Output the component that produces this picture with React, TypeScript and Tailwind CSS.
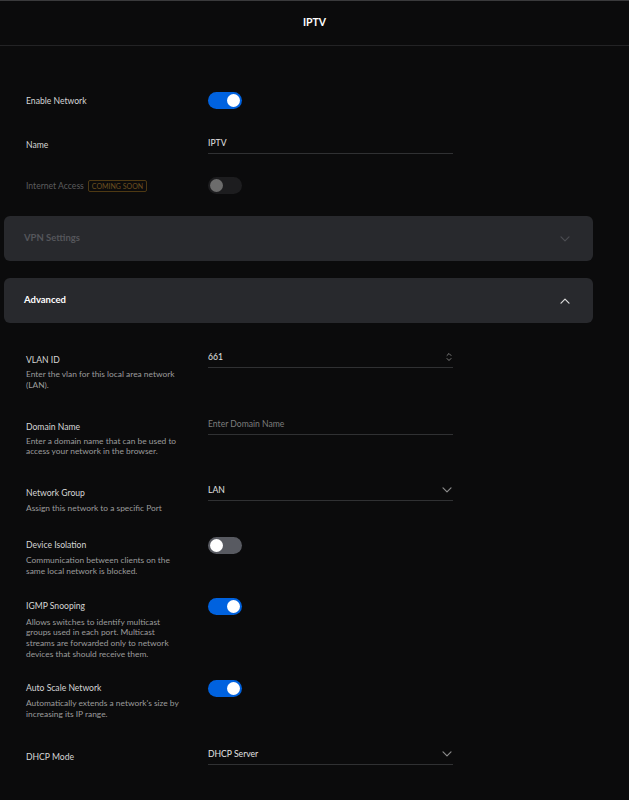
import React from 'react';

const font = { fontFamily: 'Lato, "Open Sans", sans-serif' };

function Toggle({ state }: { state: 'on' | 'off' | 'disabled' }) {
  const track =
    state === 'on' ? 'bg-[#0062df] justify-end' : state === 'off' ? 'bg-[#585a61] justify-start' : 'bg-[#1d1d1f] justify-start';
  const knob = state === 'disabled' ? 'bg-[#6c6c6c]' : 'bg-white';
  return (
    <div className={`flex items-center w-[34px] h-[17px] rounded-full px-[2px] ${track}`}>
      <div className={`w-[13px] h-[13px] rounded-full ${knob}`} />
    </div>
  );
}

function Chevron({ up, className }: { up?: boolean; className?: string }) {
  return (
    <svg width="10" height="6" viewBox="0 0 10 6" className={className} fill="none">
      <path
        d={up ? 'M1 5.2L5 1.2L9 5.2' : 'M1 0.8L5 4.8L9 0.8'}
        stroke="currentColor"
        strokeWidth="1.2"
        strokeLinecap="round"
        strokeLinejoin="round"
      />
    </svg>
  );
}

function Spinner() {
  return (
    <svg width="6" height="10" viewBox="0 0 6 10" fill="none" className="text-[#8a8a8a]">
      <path d="M1 3.5L3 1.5L5 3.5M1 6.5L3 8.5L5 6.5" stroke="currentColor" strokeWidth="0.9" strokeLinecap="round" strokeLinejoin="round" />
    </svg>
  );
}

function Field({ value, placeholder, icon }: { value?: string; placeholder?: string; icon?: React.ReactNode }) {
  return (
    <div className="flex items-start justify-between w-[245px] h-[20px] border-b border-[#303133] pt-[4px] pr-[1px]">
      {value ? (
        <span className="text-[8.6px] leading-[11px] text-[#e2e2e2]">{value}</span>
      ) : (
        <span className="text-[8.6px] leading-[11px] text-[#7d7d7d]">{placeholder}</span>
      )}
      {icon}
    </div>
  );
}

function SettingRow({
  label,
  desc,
  control,
  top,
  labelPad,
  descGap,
}: {
  label: string;
  desc?: string;
  control: React.ReactNode;
  top: string;
  labelPad: string;
  descGap: string;
}) {
  return (
    <div className={`flex pl-[26px] ${top}`}>
      <div className={`w-[182px] pr-[24px] ${labelPad}`}>
        <div className="text-[8.6px] leading-[12px] text-[#d6d6d6]">{label}</div>
        {desc && <div className={`text-[8.4px] leading-[10.8px] text-[#9c9c9c] ${descGap}`}>{desc}</div>}
      </div>
      <div>{control}</div>
    </div>
  );
}

export default function App() {
  return (
    <div className="min-h-[800px] w-full bg-[#0b0b0c] pb-[40px]" style={font}>
      <div className="h-[46px] border-t border-[#3a3a3c] border-b border-b-[#232325] flex items-center justify-center">
        <span className="text-[10.5px] font-bold text-white">IPTV</span>
      </div>

      <div className="flex items-center pl-[26px] mt-[46px] h-[17px]">
        <div className="w-[182px] text-[8.6px] leading-[12px] text-[#d6d6d6]">Enable Network</div>
        <Toggle state="on" />
      </div>

      <div className="flex pl-[26px] mt-[25px]">
        <div className="w-[182px] pt-[5px] text-[8.6px] leading-[12px] text-[#d6d6d6]">Name</div>
        <Field value="IPTV" />
      </div>

      <div className="flex items-center pl-[26px] mt-[23px] h-[17px]">
        <div className="w-[182px] flex items-center gap-[4px]">
          <span className="text-[8.6px] leading-[12px] text-[#5c5c5e]">Internet Access</span>
          <span className="border border-[#4e3913] rounded-[2px] px-[3px] text-[7px] leading-[10px] text-[#6e5020] uppercase">
            Coming Soon
          </span>
        </div>
        <Toggle state="disabled" />
      </div>

      <div className="mx-[4px] w-[589px] mt-[22px] h-[45px] rounded-[6px] bg-[#28292d] flex items-center justify-between pl-[20px] pr-[23px]">
        <span className="text-[9.5px] font-bold text-[#55565b]">VPN Settings</span>
        <Chevron className="text-[#4b4c51]" />
      </div>

      <div className="mx-[4px] w-[589px] mt-[17px] h-[45px] rounded-[6px] bg-[#28292d] flex items-center justify-between pl-[20px] pr-[23px]">
        <span className="text-[9.5px] font-bold text-white">Advanced</span>
        <Chevron up className="text-[#dcdcdc]" />
      </div>

      <SettingRow
        top="mt-[25px]"
        labelPad="pt-[6px]"
        descGap="mt-[3px]"
        label="VLAN ID"
        desc="Enter the vlan for this local area network (LAN)."
        control={<Field value="661" icon={<Spinner />} />}
      />
      <SettingRow
        top="mt-[24px]"
        labelPad="pt-[6px]"
        descGap="mt-[3px]"
        label="Domain Name"
        desc="Enter a domain name that can be used to access your network in the browser."
        control={<Field placeholder="Enter Domain Name" />}
      />
      <SettingRow
        top="mt-[24px]"
        labelPad="pt-[6px]"
        descGap="mt-[4px]"
        label="Network Group"
        desc="Assign this network to a specific Port"
        control={<Field value="LAN" icon={<Chevron className="text-[#8a8a8a] mt-[2px]" />} />}
      />
      <SettingRow
        top="mt-[23px]"
        labelPad="pt-[2px]"
        descGap="mt-[4.5px]"
        label="Device Isolation"
        desc="Communication between clients on the same local network is blocked."
        control={<Toggle state="off" />}
      />
      <SettingRow
        top="mt-[21px]"
        labelPad="pt-[2px]"
        descGap="mt-[4.5px]"
        label="IGMP Snooping"
        desc="Allows switches to identify multicast groups used in each port. Multicast streams are forwarded only to network devices that should receive them."
        control={<Toggle state="on" />}
      />
      <SettingRow
        top="mt-[20px]"
        labelPad="pt-[2px]"
        descGap="mt-[4.5px]"
        label="Auto Scale Network"
        desc="Automatically extends a network's size by increasing its IP range."
        control={<Toggle state="on" />}
      />
      <SettingRow
        top="mt-[25.5px]"
        labelPad="pt-[6px]"
        descGap="mt-[4px]"
        label="DHCP Mode"
        control={<Field value="DHCP Server" icon={<Chevron className="text-[#8a8a8a] mt-[2px]" />} />}
      />
    </div>
  );
}
